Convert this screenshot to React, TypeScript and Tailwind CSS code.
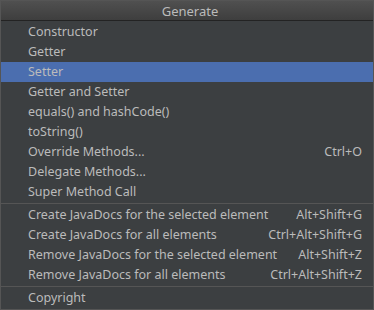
const groups = [
  [
    { label: "Constructor" },
    { label: "Getter" },
    { label: "Setter", active: true },
    { label: "Getter and Setter" },
    { label: "equals() and hashCode()" },
    { label: "toString()" },
    { label: "Override Methods...", key: "Ctrl+O" },
    { label: "Delegate Methods..." },
    { label: "Super Method Call" },
  ],
  [
    { label: "Create JavaDocs for the selected element", key: "Alt+Shift+G" },
    { label: "Create JavaDocs for all elements", key: "Ctrl+Alt+Shift+G" },
    { label: "Remove JavaDocs for the selected element", key: "Alt+Shift+Z" },
    { label: "Remove JavaDocs for all elements", key: "Ctrl+Alt+Shift+Z" },
  ],
  [{ label: "Copyright" }],
];

type Item = { label: string; key?: string; active?: boolean };

function Row({ item }: { item: Item }) {
  return (
    <div
      className={`flex h-5 items-center justify-between pl-[27px] pr-[11px] pt-px ${
        item.active ? "bg-[#4b6eaf]" : ""
      }`}
    >
      <span>{item.label}</span>
      {item.key && <span>{item.key}</span>}
    </div>
  );
}

export default function App() {
  return (
    <div
      className="flex h-[310px] w-[374px] flex-col border border-[#555555] bg-[#3c3f41] text-[12.5px] text-[#bbbbbb]"
      style={{ fontFamily: '"Noto Sans", "Open Sans", sans-serif' }}
    >
      <div className="flex h-5 items-center justify-center border-b border-[#232323] bg-gradient-to-b from-[#505050] to-[#3e3e3e] pl-[6px] pt-px text-[13px] leading-none">
        Generate
      </div>
      <div className="flex flex-col pt-[1px] leading-none">
        {groups.map((group, i) => (
          <div
            key={i}
            className={i > 0 ? "mt-[1px] border-t border-[#555555] pt-[1px]" : ""}
          >
            {group.map((item) => (
              <Row key={item.label} item={item} />
            ))}
          </div>
        ))}
      </div>
    </div>
  );
}
